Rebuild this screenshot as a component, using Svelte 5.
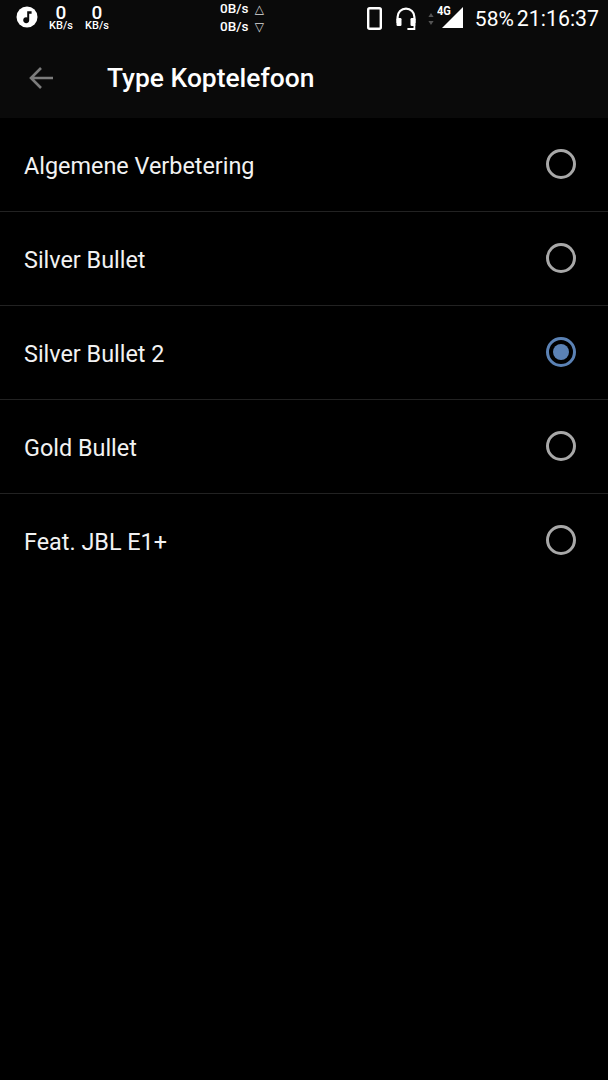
<script>
    const options = [
        { label: "Algemene Verbetering", selected: false },
        { label: "Silver Bullet", selected: false },
        { label: "Silver Bullet 2", selected: true },
        { label: "Gold Bullet", selected: false },
        { label: "Feat. JBL E1+", selected: false },
    ];
</script>

<div class="screen">
    <header class="top">
        <div class="status">
            <div class="status-left">
                <svg class="music" width="24" height="24" viewBox="0 0 24 24">
                    <circle cx="12" cy="12" r="10.5" fill="#fff" />
                    <path d="M12.2 6.2h4.4v2.6h-2.4v6.4a3 3 0 1 1-2-2.8z" fill="#0a0a0a" />
                </svg>
                <div class="speed first"><span class="num">0</span><span class="unit">KB/s</span></div>
                <div class="speed second"><span class="num">0</span><span class="unit">KB/s</span></div>
            </div>
            <div class="traffic">
                <div class="traffic-row">0B/s <span class="tri">△</span></div>
                <div class="traffic-row">0B/s <span class="tri">▽</span></div>
            </div>
            <div class="status-right">
                <svg class="phone" width="15" height="23" viewBox="0 0 15 23">
                    <rect x="1.2" y="1.2" width="12.6" height="20.6" rx="1.5" fill="none" stroke="#fff" stroke-width="2.4" />
                </svg>
                <svg class="headset" width="22" height="25" viewBox="0 0 22 25">
                    <path d="M2.6 17V11a8.4 8.4 0 0 1 16.8 0v6" fill="none" stroke="#fff" stroke-width="2.2" />
                    <rect x="1.5" y="12" width="5" height="8" rx="1.2" fill="#fff" />
                    <rect x="15.5" y="12" width="5" height="8" rx="1.2" fill="#fff" />
                    <path d="M19.4 19v4h-7" fill="none" stroke="#fff" stroke-width="1.8" />
                </svg>
                <svg class="arrows" width="6" height="14" viewBox="0 0 6 14">
                    <path d="M3 1l2.6 4H.4zM3 13L.4 9h5.2z" fill="#555" />
                </svg>
                <div class="signal">
                    <span class="net">4G</span>
                    <svg width="22" height="21" viewBox="0 0 22 21">
                        <path d="M21 0v21H0z" fill="#fff" />
                    </svg>
                </div>
                <span class="battery">58%</span>
                <span class="clock">21:16:37</span>
            </div>
        </div>
        <div class="toolbar">
            <button class="back" aria-label="Terug">
                <svg width="26" height="24" viewBox="0 0 26 24">
                    <path d="M25 12H3M13 2 3 12l10 10" fill="none" stroke="#7c7c7c" stroke-width="2.6" />
                </svg>
            </button>
            <h1>Type Koptelefoon</h1>
        </div>
    </header>

    <ul class="list">
        {#each options as option}
            <li class="row">
                <span class="label">{option.label}</span>
                <span class="radio" class:on={option.selected}></span>
            </li>
        {/each}
    </ul>
</div>

<style>
    :global(body) {
        margin: 0;
        background: #000;
    }

    .screen {
        width: 608px;
        height: 1080px;
        background: #000;
        color: #fff;
        font-family: Roboto, "Noto Sans", sans-serif;
        overflow: hidden;
    }

    .top {
        height: 118px;
        background: #0a0a0a;
    }

    .status {
        height: 38px;
        display: flex;
        align-items: flex-start;
        position: relative;
    }

    .status-left {
        display: flex;
        align-items: flex-start;
        padding: 5px 0 0 15px;
    }

    .speed {
        display: flex;
        flex-direction: column;
        align-items: center;
        width: 26px;
        font-weight: 500;
        margin-top: 0;
    }

    .speed.first {
        margin-left: 9px;
    }

    .speed.second {
        margin-left: 10px;
    }

    .num {
        font-size: 19px;
        line-height: 16px;
        height: 16px;
    }

    .unit {
        font-size: 11px;
        line-height: 10px;
        height: 10px;
    }

    .traffic {
        position: absolute;
        left: 220px;
        top: 0;
        font-size: 13.5px;
        font-weight: 500;
        line-height: 16.5px;
    }

    .traffic-row {
        white-space: nowrap;
    }

    .tri {
        font-family: "DejaVu Sans", sans-serif;
        font-size: 12px;
        margin-left: 3px;
        color: #ddd;
    }

    .status-right {
        position: absolute;
        right: 9px;
        top: 6px;
        display: flex;
        align-items: center;
        height: 25px;
    }

    .headset {
        margin-left: 13px;
    }

    .arrows {
        margin-left: 11px;
    }

    .signal {
        position: relative;
        width: 27px;
        height: 21px;
        margin-left: 3px;
        margin-top: -3px;
    }

    .signal svg {
        position: absolute;
        right: 0;
        top: 0;
    }

    .net {
        position: absolute;
        left: 0;
        top: -2px;
        font-size: 13px;
        font-weight: 700;
        line-height: 12px;
        transform: scaleX(0.85);
        transform-origin: left;
    }

    .battery {
        margin-left: 11px;
        font-size: 21px;
    }

    .clock {
        margin-left: 3px;
        font-size: 21.3px;
    }

    .toolbar {
        height: 80px;
        display: flex;
        align-items: center;
    }

    .back {
        background: none;
        border: 0;
        padding: 0;
        margin-left: 28px;
        display: flex;
        width: 79px;
    }

    h1 {
        margin: 0;
        font-size: 26.4px;
        font-weight: 500;
        line-height: 28px;
    }

    .list {
        list-style: none;
        margin: 0;
        padding: 0;
    }

    .row {
        height: 93px;
        display: flex;
        align-items: center;
        justify-content: space-between;
        padding: 0 32px 0 24px;
        border-bottom: 1px solid #222;
    }

    .row:last-child {
        border-bottom: 0;
    }

    .label {
        font-size: 23.4px;
        line-height: 28px;
        color: #f2f2f2;
        padding-top: 3px;
    }

    .radio {
        width: 30px;
        height: 30px;
        box-sizing: border-box;
        border: 3px solid #a8a8a8;
        border-radius: 50%;
        display: flex;
        align-items: center;
        justify-content: center;
        margin-top: -2px;
    }

    .radio.on {
        border-color: #5b82b5;
    }

    .radio.on::after {
        content: "";
        width: 16px;
        height: 16px;
        border-radius: 50%;
        background: #5b82b5;
    }
</style>
